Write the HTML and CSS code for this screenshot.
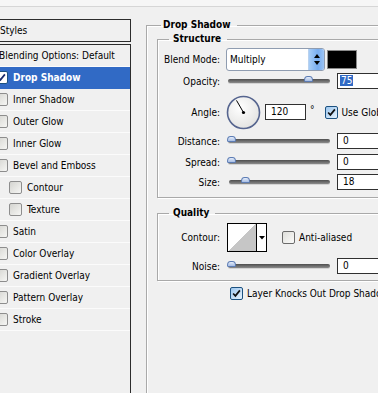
FILE: index.html
```html
<!DOCTYPE html>
<html lang="en">
<head>
    <meta charset="UTF-8">
    <title>Layer Style - Drop Shadow</title>
    <link rel="stylesheet" href="styles.css">
</head>
<body>
    <div class="topbar"></div>
    <div class="main">
        <aside class="styles-panel">
            <div class="styles-head">Styles</div>
            <ul class="styles-list">
                <li class="style-row plain">Blending Options: Default</li>
                <li class="style-row active"><span class="cb cb-on"><svg viewBox="0 0 13 13"><path d="M2.5 6.5 L5.2 9.3 L10.5 2.8"/></svg></span>Drop Shadow</li>
                <li class="style-row"><span class="cb"></span>Inner Shadow</li>
                <li class="style-row"><span class="cb"></span>Outer Glow</li>
                <li class="style-row"><span class="cb"></span>Inner Glow</li>
                <li class="style-row"><span class="cb"></span>Bevel and Emboss</li>
                <li class="style-row sub"><span class="cb"></span>Contour</li>
                <li class="style-row sub"><span class="cb"></span>Texture</li>
                <li class="style-row"><span class="cb"></span>Satin</li>
                <li class="style-row"><span class="cb"></span>Color Overlay</li>
                <li class="style-row"><span class="cb"></span>Gradient Overlay</li>
                <li class="style-row"><span class="cb"></span>Pattern Overlay</li>
                <li class="style-row"><span class="cb"></span>Stroke</li>
            </ul>
        </aside>

        <section class="options">
            <fieldset class="group outer">
                <legend>Drop Shadow</legend>

                <fieldset class="group structure">
                    <legend>Structure</legend>

                    <div class="row row-blend">
                        <span class="lbl">Blend Mode:</span>
                        <div class="select">
                            <span class="select-text">Multiply</span>
                            <span class="select-btn">
                                <svg viewBox="0 0 16 21"><path d="M8 5 L11 9 L5 9 Z M8 16 L11 12 L5 12 Z"/></svg>
                            </span>
                        </div>
                        <span class="swatch"></span>
                    </div>

                    <div class="row row-opacity">
                        <span class="lbl">Opacity:</span>
                        <div class="slider"><span class="thumb" style="left: 75%"></span></div>
                        <div class="field"><span class="sel">75</span></div>
                    </div>

                    <div class="row row-angle">
                        <span class="lbl">Angle:</span>
                        <svg class="dial" viewBox="0 0 35 35">
                            <defs>
                                <radialGradient id="dialfill" cx="40%" cy="35%" r="70%">
                                    <stop offset="0" stop-color="#ffffff"/>
                                    <stop offset="1" stop-color="#e2e2e0"/>
                                </radialGradient>
                            </defs>
                            <circle cx="17.5" cy="17.5" r="16" fill="url(#dialfill)" stroke="#56658f" stroke-width="1.6"/>
                            <line x1="17.5" y1="17.5" x2="10.5" y2="5.4" stroke="#000" stroke-width="1"/>
                            <circle cx="17.5" cy="17.5" r="1.6" fill="#000"/>
                        </svg>
                        <div class="field field-angle">120</div>
                        <span class="deg">°</span>
                        <span class="cb cb-blue"><svg viewBox="0 0 13 13"><path d="M2.5 6.5 L5.2 9.3 L10.5 2.8"/></svg></span>
                        <span class="cb-text">Use Global Light</span>
                    </div>

                    <div class="row row-distance">
                        <span class="lbl">Distance:</span>
                        <div class="slider"><span class="thumb" style="left: 0%"></span></div>
                        <div class="field">0</div>
                    </div>

                    <div class="row row-spread">
                        <span class="lbl">Spread:</span>
                        <div class="slider"><span class="thumb" style="left: 0%"></span></div>
                        <div class="field">0</div>
                    </div>

                    <div class="row row-size">
                        <span class="lbl">Size:</span>
                        <div class="slider slider-size"><span class="thumb" style="left: 13%"></span></div>
                        <div class="field">18</div>
                    </div>
                </fieldset>

                <fieldset class="group quality">
                    <legend>Quality</legend>

                    <div class="row row-contour">
                        <span class="lbl">Contour:</span>
                        <div class="contour">
                            <span class="contour-preview"></span>
                            <span class="contour-btn">
                                <svg viewBox="0 0 10 27"><path d="M2 12 L8 12 L5 15.5 Z"/></svg>
                            </span>
                        </div>
                        <span class="cb cb-plain"></span>
                        <span class="cb-text">Anti-aliased</span>
                    </div>

                    <div class="row row-noise">
                        <span class="lbl">Noise:</span>
                        <div class="slider"><span class="thumb" style="left: 0%"></span></div>
                        <div class="field">0</div>
                    </div>
                </fieldset>

                <div class="knock">
                    <span class="cb cb-blue"><svg viewBox="0 0 13 13"><path d="M2.5 6.5 L5.2 9.3 L10.5 2.8"/></svg></span>
                    <span class="cb-text">Layer Knocks Out Drop Shadow</span>
                </div>
            </fieldset>
        </section>
    </div>
</body>
</html>
```

FILE: styles.css
```css
* {
    box-sizing: border-box;
    margin: 0;
    padding: 0;
}

body {
    font-family: "DejaVu Sans Condensed", "Liberation Sans", sans-serif;
    font-size: 10px;
    color: #000;
    background: #f0f0f0;
    width: 378px;
    height: 393px;
    overflow: hidden;
}

.topbar {
    height: 7px;
    background: #f6f6f6;
    border-bottom: 1px solid #d6d6d6;
}

.main {
    display: flex;
    align-items: flex-start;
}

/* left: list of styles */

.styles-panel {
    flex: none;
    width: 133px;
    margin-left: -2px;
    margin-top: 12px;
}

.styles-head {
    height: 23px;
    line-height: 21px;
    padding-left: 1px;
    border: 1px solid #2c2c2c;
    background: #f0f0f0;
}

.styles-list {
    list-style: none;
    margin-top: 2px;
    height: 360px;
    border: 1px solid #2c2c2c;
    border-bottom: none;
}

.style-row {
    display: flex;
    align-items: center;
    height: 22px;
    border-bottom: 1px solid #fbfbfb;
}

.style-row .cb {
    margin-left: -4px;
    margin-right: 5px;
}

.style-row.sub .cb {
    margin-left: 10px;
}

.style-row.active {
    background: #316ac5;
    color: #fff;
    font-weight: bold;
    border-bottom-color: #316ac5;
}

/* checkboxes */

.cb {
    flex: none;
    display: inline-block;
    width: 13px;
    height: 13px;
    border: 1px solid #8d8d8d;
    border-radius: 2px;
    background: linear-gradient(135deg, #d4d4d0, #f6f6f4);
}

.cb svg {
    display: block;
    width: 11px;
    height: 11px;
}

.cb svg path {
    fill: none;
    stroke: #1a2a6a;
    stroke-width: 2;
}

.cb-on {
    background: #fff;
    border-color: #1c5180;
}

.cb-blue {
    border-color: #1c5180;
    background: linear-gradient(135deg, #9cc6ee, #e6f2fd);
}

.cb-blue svg path {
    stroke: #101010;
}

.cb-plain {
    border-color: #6b6b6b;
    background: linear-gradient(135deg, #dededa, #fbfbfa);
}

.cb-text {
    white-space: nowrap;
    margin-left: 4px;
}

/* right: options */

.options {
    flex: none;
    width: 260px;
    margin-left: 15px;
    margin-top: 11px;
}

.group {
    border: 1px solid #a9a9a9;
    box-shadow: 1px 1px 0 #fff, inset 1px 1px 0 #fff;
}

.group legend {
    font-weight: bold;
    line-height: 14px;
}

.outer {
    height: 400px;
    padding: 0 0 0 10px;
}

.outer > legend {
    margin-left: 4px;
    padding: 0 6px 0 2px;
}

.structure,
.quality {
    width: 240px;
    padding: 2px 0 7px 0;
}

.structure > legend,
.quality > legend {
    margin-left: 11px;
    padding: 0 6px 0 4px;
}

.quality {
    margin-top: 8px;
    padding-top: 3px;
    padding-bottom: 6px;
}

.row {
    display: flex;
    align-items: center;
}

.lbl {
    flex: none;
    width: 62px;
    text-align: right;
    white-space: nowrap;
    margin-right: 6px;
}

.row-blend {
    height: 23px;
}

.row-opacity {
    height: 20px;
}

.row-angle {
    height: 36px;
    margin-top: 3px;
}

.row-distance {
    height: 16px;
    margin-top: 3px;
}

.row-spread {
    height: 16px;
    margin-top: 5px;
}

.row-size {
    height: 16px;
    margin-top: 4px;
}

.row-contour {
    height: 29px;
}

.row-noise {
    height: 16px;
    margin-top: 6px;
}

/* blend mode select */

.select {
    display: flex;
    width: 99px;
    height: 23px;
    border: 1px solid #8f9cb0;
    border-radius: 3px;
    background: #fff;
    overflow: hidden;
}

.select-text {
    flex: 1;
    line-height: 21px;
    padding-left: 3px;
}

.select-btn {
    flex: none;
    width: 16px;
    background: linear-gradient(90deg, #a8cdf6, #77acef 60%, #9cc4f4);
    border-left: 1px solid #b9d2ef;
}

.select-btn svg {
    display: block;
    width: 16px;
    height: 21px;
}

.swatch {
    flex: none;
    width: 30px;
    height: 19px;
    margin-left: 2px;
    background: #000;
    border: 1px solid #8a8a8a;
}

/* sliders and number fields */

.slider {
    position: relative;
    flex: none;
    width: 102px;
    height: 4px;
    margin-left: 2px;
    margin-right: 7px;
    border-radius: 2px;
    background: linear-gradient(#4e4e4e, #8c8c8c);
    box-shadow: 0 1px 0 #d4d4d4;
}

.slider-size {
    margin-left: 3px;
    width: 101px;
}

.thumb {
    position: absolute;
    top: -3px;
    width: 9px;
    height: 6px;
    margin-left: -1px;
    border: 1px solid #5c7cb4;
    border-radius: 50% 50% 2px 2px / 90% 90% 2px 2px;
    background: linear-gradient(#e6eefa, #a7bde4);
}

.field {
    flex: none;
    width: 46px;
    height: 16px;
    line-height: 14px;
    padding-left: 5px;
    border: 1px solid #303030;
    background: #fff;
}

.sel {
    background: #316ac5;
    color: #fff;
    padding: 0 1px;
    margin-left: -3px;
}

/* angle */

.dial {
    flex: none;
    width: 35px;
    height: 35px;
}

.field-angle {
    width: 41px;
    margin-left: 4px;
}

.deg {
    margin: -6px 10px 0 4px;
}

/* contour */

.contour {
    display: flex;
    width: 40px;
    height: 29px;
    margin-left: 1px;
    margin-right: 15px;
    border: 1px solid #000;
    background: #fff;
}

.contour-preview {
    flex: none;
    width: 29px;
    height: 27px;
    background: linear-gradient(to bottom right, #fff 50%, #c6c6c6 50%);
    border-right: 1px solid #000;
}

.contour-btn svg {
    display: block;
    width: 10px;
    height: 27px;
}

.knock {
    display: flex;
    align-items: center;
    margin: 6px 0 0 73px;
}
```
